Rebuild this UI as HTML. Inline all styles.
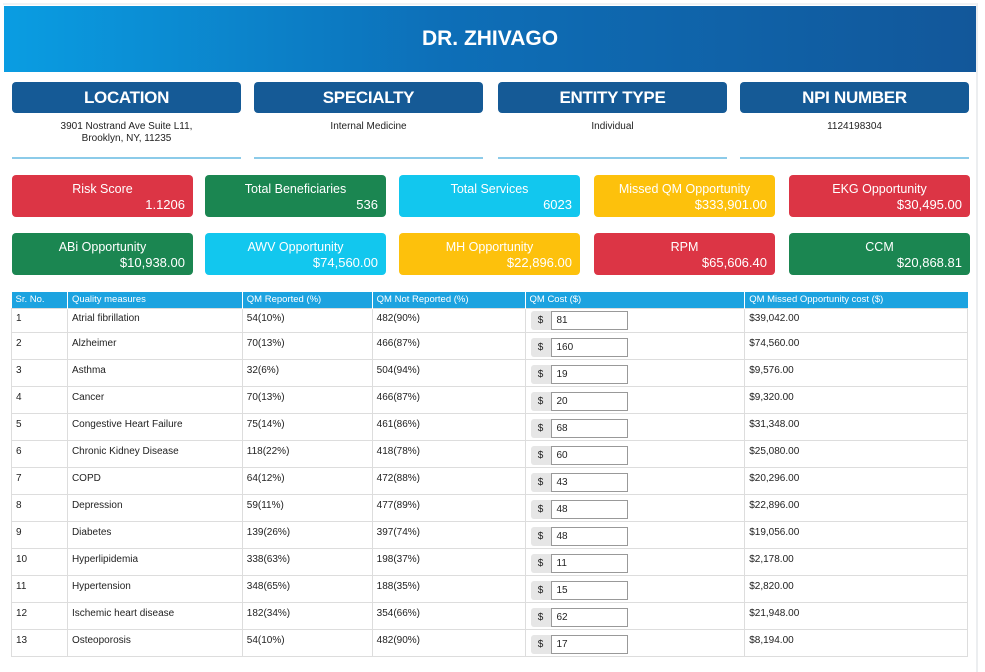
<!DOCTYPE html>
<html><head><style>
*{box-sizing:border-box;margin:0;padding:0}
body{width:985px;height:672px;background:#fff;font-family:"Liberation Sans",sans-serif;position:relative;overflow:hidden}
.page{position:absolute;left:3px;top:3px;width:975px;height:669px;border-right:2px solid #eceef0;border-top:2px solid #f0f2f4}
.hdr{position:absolute;left:4px;top:6px;width:972px;height:66px;background:linear-gradient(90deg,#0a9de2 0%,#0d6fb8 45%,#12579a 100%);color:#fff;font-weight:bold;font-size:21px;text-align:center;line-height:66px}
.tb{position:absolute;top:82px;width:229px;height:31px;background:#155a96;border-radius:4px;color:#fff;font-weight:bold;font-size:17px;letter-spacing:-0.3px;text-align:center;line-height:31px}
.tv{position:absolute;top:121px;width:229px;text-align:center;font-size:10px;line-height:12px;color:#222}
.ln{position:absolute;top:157px;width:229px;height:2px;background:#8ccbe9}
.c{position:absolute;width:181px;height:42px;border-radius:4px;color:#fff;font-size:12.5px}
.c .t{position:absolute;left:0;right:0;top:7px;text-align:center}
.c .v{position:absolute;right:8px;top:22px;font-size:13px}
.r{background:#dc3545}.g{background:#1b8651}.cy{background:#12c7ee}.y{background:#fdc10c}
table{position:absolute;left:11px;top:292px;width:957px;border-collapse:collapse;font-size:10px;color:#222}
th{background:#1ca3e0;color:#fff;font-weight:normal;text-align:left;height:16px;padding:0 4px;border-left:1px solid #fff;font-size:9.5px}
td{border:1px solid #ddd;height:27px;vertical-align:top;padding:5px 4px 0;position:relative}
tr.f td{height:24px;padding-top:4px}
.in{position:absolute;left:5px;top:5px;height:19px;width:97px}
tr.f .in{top:2px}
.in .a{position:absolute;left:0;top:0;width:20px;height:19px;background:#e6e6e6;border-radius:3px 0 0 3px;text-align:center;line-height:19px;font-size:10px}
.in .b{position:absolute;left:20px;top:0;width:77px;height:19px;border:1px solid #999;background:#fff;padding-left:5px;line-height:17px;font-size:10px}
</style></head><body>
<div class="page"></div>
<div class="hdr">DR. ZHIVAGO</div>
<div class="tb" style="left:12px">LOCATION</div>
<div class="tb" style="left:254px">SPECIALTY</div>
<div class="tb" style="left:498px">ENTITY TYPE</div>
<div class="tb" style="left:740px">NPI NUMBER</div>
<div class="tv" style="left:12px">3901 Nostrand Ave Suite L11,<br>Brooklyn, NY, 11235</div>
<div class="tv" style="left:254px">Internal Medicine</div>
<div class="tv" style="left:498px">Individual</div>
<div class="tv" style="left:740px">1124198304</div>
<div class="ln" style="left:12px"></div><div class="ln" style="left:254px"></div><div class="ln" style="left:498px"></div><div class="ln" style="left:740px"></div>

<div class="c r" style="left:12px;top:175px"><div class="t">Risk Score</div><div class="v">1.1206</div></div>
<div class="c g" style="left:205px;top:175px"><div class="t">Total Beneficiaries</div><div class="v">536</div></div>
<div class="c cy" style="left:399px;top:175px"><div class="t">Total Services</div><div class="v">6023</div></div>
<div class="c y" style="left:594px;top:175px"><div class="t">Missed QM Opportunity</div><div class="v">$333,901.00</div></div>
<div class="c r" style="left:789px;top:175px"><div class="t">EKG Opportunity</div><div class="v">$30,495.00</div></div>
<div class="c g" style="left:12px;top:233px"><div class="t">ABi Opportunity</div><div class="v">$10,938.00</div></div>
<div class="c cy" style="left:205px;top:233px"><div class="t">AWV Opportunity</div><div class="v">$74,560.00</div></div>
<div class="c y" style="left:399px;top:233px"><div class="t">MH Opportunity</div><div class="v">$22,896.00</div></div>
<div class="c r" style="left:594px;top:233px"><div class="t">RPM</div><div class="v">$65,606.40</div></div>
<div class="c g" style="left:789px;top:233px"><div class="t">CCM</div><div class="v">$20,868.81</div></div>

<table>
<colgroup><col style="width:56px"><col style="width:175px"><col style="width:130px"><col style="width:153px"><col style="width:220px"><col style="width:223px"></colgroup>
<tr><th style="border-left:none">Sr. No.</th><th>Quality measures</th><th>QM Reported (%)</th><th>QM Not Reported (%)</th><th>QM Cost ($)</th><th>QM Missed Opportunity cost ($)</th></tr>
<tr class="f"><td>1</td><td>Atrial fibrillation</td><td>54(10%)</td><td>482(90%)</td><td><div class="in"><div class="a">$</div><div class="b">81</div></div></td><td>$39,042.00</td></tr>
<tr><td>2</td><td>Alzheimer</td><td>70(13%)</td><td>466(87%)</td><td><div class="in"><div class="a">$</div><div class="b">160</div></div></td><td>$74,560.00</td></tr>
<tr><td>3</td><td>Asthma</td><td>32(6%)</td><td>504(94%)</td><td><div class="in"><div class="a">$</div><div class="b">19</div></div></td><td>$9,576.00</td></tr>
<tr><td>4</td><td>Cancer</td><td>70(13%)</td><td>466(87%)</td><td><div class="in"><div class="a">$</div><div class="b">20</div></div></td><td>$9,320.00</td></tr>
<tr><td>5</td><td>Congestive Heart Failure</td><td>75(14%)</td><td>461(86%)</td><td><div class="in"><div class="a">$</div><div class="b">68</div></div></td><td>$31,348.00</td></tr>
<tr><td>6</td><td>Chronic Kidney Disease</td><td>118(22%)</td><td>418(78%)</td><td><div class="in"><div class="a">$</div><div class="b">60</div></div></td><td>$25,080.00</td></tr>
<tr><td>7</td><td>COPD</td><td>64(12%)</td><td>472(88%)</td><td><div class="in"><div class="a">$</div><div class="b">43</div></div></td><td>$20,296.00</td></tr>
<tr><td>8</td><td>Depression</td><td>59(11%)</td><td>477(89%)</td><td><div class="in"><div class="a">$</div><div class="b">48</div></div></td><td>$22,896.00</td></tr>
<tr><td>9</td><td>Diabetes</td><td>139(26%)</td><td>397(74%)</td><td><div class="in"><div class="a">$</div><div class="b">48</div></div></td><td>$19,056.00</td></tr>
<tr><td>10</td><td>Hyperlipidemia</td><td>338(63%)</td><td>198(37%)</td><td><div class="in"><div class="a">$</div><div class="b">11</div></div></td><td>$2,178.00</td></tr>
<tr><td>11</td><td>Hypertension</td><td>348(65%)</td><td>188(35%)</td><td><div class="in"><div class="a">$</div><div class="b">15</div></div></td><td>$2,820.00</td></tr>
<tr><td>12</td><td>Ischemic heart disease</td><td>182(34%)</td><td>354(66%)</td><td><div class="in"><div class="a">$</div><div class="b">62</div></div></td><td>$21,948.00</td></tr>
<tr><td>13</td><td>Osteoporosis</td><td>54(10%)</td><td>482(90%)</td><td><div class="in"><div class="a">$</div><div class="b">17</div></div></td><td>$8,194.00</td></tr>
</table>
</body></html>
